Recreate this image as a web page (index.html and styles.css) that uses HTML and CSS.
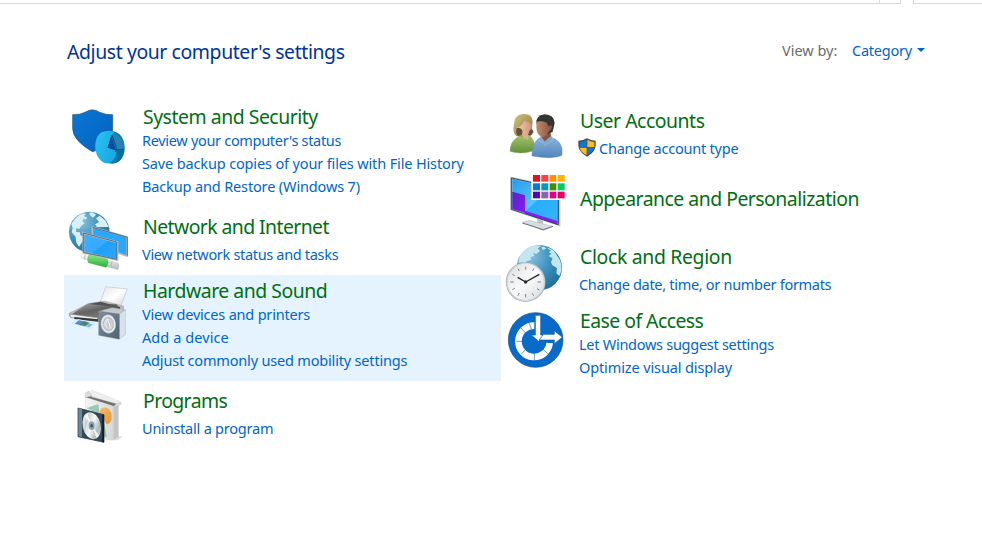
FILE: index.html
```html
<!DOCTYPE html>
<html lang="en">
<head>
<meta charset="utf-8">
<title>Control Panel</title>
<link rel="stylesheet" href="styles.css">
</head>
<body>
<div class="toolbar"><div class="address"><span class="refresh"></span></div><div class="search"></div></div>
<header class="header">
  <h1>Adjust your computer's settings</h1>
  <div class="view"><span class="view-label">View by:</span><a class="view-value">Category</a><svg class="caret" viewBox="0 0 8 4"><path d="M0 0h8L4 4z"/></svg></div>
</header>
<main class="columns">
  <div class="column">
    <section class="card">
      <svg class="icon" viewBox="12 3 210 180">
        <defs>
          <linearGradient id="shield" x2="1" y2="1"><stop stop-color="#0878d4"/><stop offset="1" stop-color="#0560bd"/></linearGradient>
          <linearGradient id="pie" x2="1" y2="1"><stop stop-color="#2bc4f3"/><stop offset="1" stop-color="#16a3de"/></linearGradient>
        </defs>
        <path d="M38 44Q60 45 75 37Q97 22 119 37Q136 45 158 44V87Q157 121 99 156Q39 122 38 86Z" fill="url(#shield)" stroke="#24527d" stroke-width="2"/>
        <path d="M133 95L157 93C179 96 194 116 194 143C194 169 179 189 158 191L143 190Z" fill="#087da9"/>
        <ellipse cx="138" cy="142" rx="32" ry="48" fill="url(#pie)" transform="rotate(-6 138 142)"/>
        <path d="M134 94Q149 90 163 97L155 106L169 151L141 143Z" fill="#20b5e7"/>
        <path d="M154 106L142 143L169 152Z" fill="#064b9d"/>
        <path d="M163 98L154 107L171 150L193 147Q193 116 163 98Z" fill="#2584b4"/>
        <path d="M156 106L171 150L192 147M171 151L166 155" stroke="#0b4b79" stroke-width="3" fill="none"/>
        <path d="M171 153L193 150Q190 180 169 188Q175 171 171 153Z" fill="#086e9c"/>
      </svg>
      <div class="text">
        <h2 class="t-system">System and Security</h2>
        <a class="l-review">Review your computer's status</a>
        <a class="l-save">Save backup copies of your files with File History</a>
        <a class="l-backup">Backup and Restore (Windows 7)</a>
      </div>
    </section>
    <section class="card single">
      <svg class="icon" viewBox="12 18 210 180">
        <defs>
          <radialGradient id="globe" cx=".3" cy=".25" r=".9"><stop stop-color="#8ac2df"/><stop offset=".5" stop-color="#3c91bd"/><stop offset="1" stop-color="#16698f"/></radialGradient>
          <linearGradient id="screen" x2="1" y2="1"><stop stop-color="#42aef9"/><stop offset=".5" stop-color="#35aaff"/><stop offset=".51" stop-color="#1e9ffb"/><stop offset="1" stop-color="#2ba9ff"/></linearGradient>
          <linearGradient id="cable" x1=".1" x2="0" y2="1"><stop stop-color="#fff"/><stop offset="1" stop-color="#adb5b6"/></linearGradient>
          <linearGradient id="plug" x1=".1" x2="0" y2="1"><stop stop-color="#84e982"/><stop offset="1" stop-color="#25a932"/></linearGradient>
        </defs>
        <circle cx="88" cy="81" r="61" fill="url(#globe)"/>
        <path transform="translate(0 4)" d="M34 54Q48 30 68 21L78 23L72 29L82 34L75 41L72 36L67 45L74 51L63 59L58 68L48 66L49 77L60 78L61 87L72 91L68 105L57 121L49 109L47 91L35 78L38 65ZM87 20L96 18L108 25L99 34L92 29ZM108 36L119 28L137 43L146 62H111L105 54L117 47ZM57 38L64 35L68 39L62 44Z" fill="#d8eff4"/>
        <path d="M97 66L201 96V153L174 144L97 119Z" fill="#29a7fb" stroke="#b1b9bf" stroke-width="5"/>
        <path d="M98 67L202 97V152" fill="none" stroke="#29485a" stroke-width="2"/>
        <path d="M70 84L172 112V165L70 142Z" fill="url(#screen)" stroke="#b5bec3" stroke-width="6"/>
        <path d="M70 84L170 111V163L70 142Z" fill="none" stroke="#25495f" stroke-width="2"/>
        <path d="M65 146L91 150V168L64 159Q61 151 65 146ZM139 165L174 174Q181 184 173 194L139 184Z" fill="url(#cable)" stroke="#b3babc" stroke-width="1"/>
        <path d="M88 149L142 163Q149 175 138 187L85 173Q80 157 88 149Z" fill="url(#plug)" stroke="#3f9850" stroke-width="1"/>
        <path d="M156 169Q151 178 155 188M76 149Q72 156 75 164" stroke="#a0a8a8" stroke-width="2" fill="none"/>
      </svg>
      <div class="text">
        <h2 class="t-network">Network and Internet</h2>
        <a class="l-network">View network status and tasks</a>
      </div>
    </section>
    <section class="card selected">
      <svg class="icon" viewBox="12 0 210 180">
        <defs>
          <linearGradient id="paper" x2="1" y2="1"><stop stop-color="#e2e2e2"/><stop offset=".5" stop-color="#fff"/><stop offset="1" stop-color="#cfcfcf"/></linearGradient>
          <linearGradient id="lid" x2=".7" y2="1"><stop stop-color="#b1b1b1"/><stop offset=".5" stop-color="#626262"/><stop offset="1" stop-color="#858585"/></linearGradient>
          <linearGradient id="speaker" x2="1" y2="1"><stop stop-color="#7d8c9a"/><stop offset="1" stop-color="#4e6275"/></linearGradient>
          <radialGradient id="cone"><stop stop-color="#858b90"/><stop offset=".3" stop-color="#f3f4f4"/><stop offset=".65" stop-color="#b8bec2"/><stop offset=".85" stop-color="#f2f3f4"/><stop offset="1" stop-color="#a0abb3"/></radialGradient>
        </defs>
        <path d="M137 35L202 42L180 99L119 88Z" fill="url(#paper)" stroke="#c3c5c6" stroke-width="2"/>
        <path d="M28 114L88 85L134 78L191 93L190 116L116 139L91 137L29 125Z" fill="#bdbdbd" stroke="#8c8c8c" stroke-width="1"/>
        <path d="M31 121L82 86L170 88L178 101L117 134Z" fill="url(#lid)"/>
        <path d="M84 87L122 80L181 96L179 103L167 95Z" fill="#535353"/>
        <path d="M29 117L113 128V137L33 128Z" fill="#ededed" stroke="#888" stroke-width="2"/>
        <path d="M43 126L115 133V140L43 132Z" fill="#363838"/>
        <path d="M55 133L104 145L93 160L36 145Z" fill="#edf7fd" stroke="#a8c2d1" stroke-width="1"/>
        <path d="M56 136L72 139L62 151L44 146Z" fill="#508ed4"/><path d="M72 138L90 144L76 154L59 150Z" fill="#3f8871"/><path d="M85 145L99 147L89 157L75 154Z" fill="#82b8e6"/>
        <path d="M116 109L178 117L196 104V179L178 192Z" fill="#bdc9d3"/>
        <path d="M116 109L156 98L196 104L178 118Z" fill="#c3c8cc" stroke="#8d979f" stroke-width="1"/>
        <path d="M178 118L196 105V179L178 192Z" fill="#d7e2e9" stroke="#a8b3bc" stroke-width="1"/>
        <path d="M116 109L178 117V193L116 181Z" fill="url(#speaker)" stroke="#778692" stroke-width="1"/>
        <ellipse cx="145" cy="147" rx="23" ry="29" fill="url(#cone)" transform="rotate(-8 145 147)"/>
        <ellipse cx="147" cy="147" rx="8" ry="12" fill="#c3c8cc"/><path d="M141 130L148 147L151 161" stroke="#f8f8f8" stroke-width="3" fill="none"/>
      </svg>
      <div class="text">
        <h2 class="t-hardware">Hardware and Sound</h2>
        <a class="l-devices">View devices and printers</a>
        <a class="l-add">Add a device</a>
        <a class="l-adjust">Adjust commonly used mobility settings</a>
      </div>
    </section>
    <section class="card single">
      <svg class="icon" viewBox="-3 15 210 180">
        <defs>
          <linearGradient id="box"><stop stop-color="#f5f5f5"/><stop offset="1" stop-color="#d8d8d8"/></linearGradient>
          <linearGradient id="orange" x2="1" y2="1"><stop stop-color="#f7bd6b"/><stop offset="1" stop-color="#e99431"/></linearGradient>
          <linearGradient id="disc" x2="1" y2="1"><stop stop-color="#fff"/><stop offset=".3" stop-color="#cbd3d3"/><stop offset=".5" stop-color="#fafafa"/><stop offset=".75" stop-color="#adb8b9"/><stop offset="1" stop-color="#f7f7f7"/></linearGradient>
        </defs>
        <path d="M145 170L174 169L159 181H117Z" fill="#ddd"/>
        <path d="M61 52L145 76V180L61 161Z" fill="url(#box)" stroke="#c9c9c9" stroke-width="1"/>
        <path d="M145 76L161 71V171L145 180Z" fill="#c4c4c4"/>
        <path d="M61 51L82 45L160 69L146 78Z" fill="#6f6f6f"/>
        <path d="M80 30L166 65L160 73L79 50Z" fill="#eee" stroke="#c5c5c5" stroke-width="1"/>
        <path d="M61 39L73 33L80 49L61 52ZM149 75L167 67L169 72L149 82Z" fill="#ddd" stroke="#ababab" stroke-width="1"/>
        <path d="M65 84L100 72L103 98L85 94ZM117 127L126 171L114 169Z" fill="#9bc8b4"/>
        <path d="M103 99Q104 83 120 82Q136 86 140 105Q141 129 127 133Q117 131 115 103Z" fill="url(#orange)"/>
        <path d="M39 84L117 104V187L39 170Z" fill="#33495c" stroke="#17232e" stroke-width="2"/>
        <path d="M40 84L51 87V172L40 169Z" fill="#718493"/>
        <ellipse cx="80" cy="137" rx="27" ry="41" fill="url(#disc)" transform="rotate(-13 80 137)"/>
        <path d="M79 133L58 109L67 101ZM83 140L102 166L94 174Z" fill="#fff" opacity=".8"/>
        <ellipse cx="80" cy="137" rx="9" ry="13" fill="#8fa3b0"/><ellipse cx="80" cy="137" rx="4" ry="6" fill="#405d70"/>
        <path d="M114 104V187" stroke="#071118" stroke-width="4"/>
      </svg>
      <div class="text">
        <h2 class="t-programs">Programs</h2>
        <a class="l-uninstall">Uninstall a program</a>
      </div>
    </section>
  </div>
  <div class="column right">
    <section class="card single">
      <svg class="icon" viewBox="3 15 210 180">
        <defs>
          <linearGradient id="blonde" x2="1" y2="1"><stop stop-color="#d2c17f"/><stop offset="1" stop-color="#8e7745"/></linearGradient>
          <linearGradient id="face1"><stop stop-color="#f5ceb1"/><stop offset="1" stop-color="#ce967b"/></linearGradient>
          <linearGradient id="face2"><stop stop-color="#c18d70"/><stop offset="1" stop-color="#855139"/></linearGradient>
          <linearGradient id="green" x2="0" y2="1"><stop stop-color="#a4c86c"/><stop offset="1" stop-color="#638e38"/></linearGradient>
          <linearGradient id="blue" x2="0" y2="1"><stop stop-color="#8fb7df"/><stop offset="1" stop-color="#5184bb"/></linearGradient>
        </defs>
        <path d="M30 154Q31 123 54 111L65 104L90 107Q103 119 106 145L96 154Q62 164 30 154Z" fill="url(#green)" stroke="#739650" stroke-width="1"/>
        <path d="M49 109Q36 98 42 72Q43 43 70 42Q97 41 98 64L94 104L82 110Z" fill="url(#blonde)"/>
        <path d="M63 98L87 100L84 120L71 115Z" fill="#dbae90"/>
        <path d="M50 84Q66 80 72 64Q87 65 94 74Q94 99 81 105Q66 103 62 87Z" fill="url(#face1)"/>
        <path d="M56 83Q73 88 65 104L54 108Q46 100 50 85ZM90 89Q99 84 100 97L93 107L84 104Z" fill="#655036"/>
        <path d="M96 168Q96 133 113 118L127 108L153 112Q181 121 186 144L186 166Q158 179 96 168Z" fill="url(#blue)" stroke="#4d7fae" stroke-width="1"/>
        <path d="M126 102L151 95L154 113L133 128L121 112Z" fill="#875239"/>
        <path d="M109 70Q107 47 134 43Q162 44 164 69L158 95L142 103Z" fill="#343433"/>
        <path d="M109 65Q124 61 140 68L146 79L153 76Q159 78 153 89L146 96Q139 112 125 112Q108 101 109 80Z" fill="url(#face2)"/>
        <path d="M122 109L134 125L154 108L160 117L136 137L118 119Z" fill="#7fa9d5" stroke="#b9d4ef" stroke-width="1"/>
        <path d="M171 148V170M114 145V168" stroke="#6696c5" stroke-width="2"/>
      </svg>
      <div class="text">
        <h2 class="t-user">User Accounts</h2>
        <a class="l-account"><svg class="uac" viewBox="0 0 54 57"><path d="M1 8Q16 8 27 1Q38 8 53 8V23Q51 42 27 56Q3 42 1 23Z" fill="#474747"/><path d="M5 12Q17 11 26 5V28H5ZM28 28H49Q47 41 28 52Z" fill="#0c78d5"/><path d="M28 5Q37 11 49 12V27H28ZM5 29H26V52Q7 41 5 29Z" fill="#ffb918"/></svg>Change account type</a>
      </div>
    </section>
    <section class="card bare">
      <svg class="icon" viewBox="3 12 210 180">
        <defs>
          <linearGradient id="monitor" x2="1" y2="1"><stop stop-color="#2199ef"/><stop offset=".5" stop-color="#5bc3fb"/><stop offset=".51" stop-color="#2aaefa"/><stop offset="1" stop-color="#35b5fa"/></linearGradient>
          <linearGradient id="purple" x2="1" y2="1"><stop stop-color="#5426bd"/><stop offset="1" stop-color="#8b16ff"/></linearGradient>
        </defs>
        <path d="M112 157L129 160V180L112 174Z" fill="#bac1c4"/>
        <path d="M67 171L88 166L159 184L130 197Z" fill="#d6dce0" stroke="#9ca7ae" stroke-width="1"/><path d="M67 174L130 194L159 184" fill="none" stroke="#65737c" stroke-width="3"/>
        <path d="M34 38L178 70V180L34 133Z" fill="url(#monitor)" stroke="#c3c9ce" stroke-width="6"/>
        <path d="M37 80L75 91V143L37 132Z" fill="url(#purple)"/><path d="M75 137L172 168V179L75 146Z" fill="#861bf2"/>
        <path d="M34 39L175 70V179L34 133Z" fill="none" stroke="#344858" stroke-width="3"/>
        <path d="M94 27H198V105H94Z" fill="#fff"/>
        <path d="M99 30h21v20H99z" fill="#e60e20"/><path d="M124 30h21v20h-21z" fill="#ff4141"/><path d="M149 30h20v20h-20z" fill="#ff9100"/><path d="M173 30h21v20h-21z" fill="#ffb500"/>
        <path d="M99 55h21v21H99z" fill="#087bd0"/><path d="M124 55h21v21h-21z" fill="#0799b6"/><path d="M149 55h20v21h-20z" fill="#458a03"/><path d="M173 55h21v21h-21z" fill="#00cb6b"/>
        <path d="M99 80h21v20H99z" fill="#5600ce"/><path d="M124 80h21v20h-21z" fill="#8b63bb"/><path d="M149 80h20v20h-20z" fill="#e4008b"/><path d="M173 80h21v20h-21z" fill="#e9005a"/>
      </svg>
      <div class="text"><h2 class="t-appearance">Appearance and Personalization</h2></div>
    </section>
    <section class="card single">
      <svg class="icon" viewBox="3 3 210 180">
        <defs><linearGradient id="dial" x2="1" y2="1"><stop stop-color="#d7dadd"/><stop offset=".5" stop-color="#fafafa"/><stop offset="1" stop-color="#d6d8dd"/></linearGradient></defs>
        <circle cx="118" cy="83" r="68" fill="url(#globe)"/>
        <path d="M59 49Q78 21 108 16L124 18L113 25L120 33L109 42L99 38L103 47L91 51L94 59L80 64L77 74L67 67L55 69ZM141 24Q155 25 164 36L172 48Q187 67 184 93L178 108L169 100L171 84L157 76L153 66L158 55L145 48L154 42L146 36L153 32ZM124 21L133 20L139 26L128 30Z" fill="#c4e6f1"/>
        <circle cx="77" cy="126" r="57" fill="url(#dial)" stroke="#a5b0b8" stroke-width="5"/>
        <circle cx="77" cy="126" r="56" fill="none" stroke="#eef1f4" stroke-width="2"/>
        <path d="M77 80v9M77 162v10M31 126h10M113 126h10M54 86l4 7M97 160l4 7M37 103l7 4M111 146l7 4M37 149l7-4M54 167l4-8M98 92l4-7" stroke="#7e8389" stroke-width="3"/>
        <path d="M77 126L118 103M77 126L53 112" fill="none" stroke="#222527" stroke-width="4"/><circle cx="77" cy="126" r="5" fill="#242728"/>
      </svg>
      <div class="text">
        <h2 class="t-clock">Clock and Region</h2>
        <a class="l-date">Change date, time, or number formats</a>
      </div>
    </section>
    <section class="card">
      <svg class="icon" viewBox="3 0 210 180">
        <circle cx="107" cy="105" r="82" fill="#086bc9" stroke="#124c85" stroke-width="2"/>
        <path d="M103 62A47 47 0 1 0 149 114" fill="none" stroke="#fff" stroke-width="20"/>
        <path d="M62 68L77 84M49 109H69M64 147L78 132M103 166V145M143 146L127 131M87 54L94 72" stroke="#176bb6" stroke-width="2"/>
        <path d="M106 31H122V90H134L116 109L94 90H106Z" fill="#fff" stroke="#0c5baa" stroke-width="2"/>
        <path d="M130 88H163V77L187 97L163 116V105H118Z" fill="#fff" stroke="#0c5baa" stroke-width="2"/>
      </svg>
      <div class="text">
        <h2 class="t-ease">Ease of Access</h2>
        <a class="l-suggest">Let Windows suggest settings</a>
        <a class="l-optimize">Optimize visual display</a>
      </div>
    </section>
  </div>
</main>
</body>
</html>
```
FILE: styles.css
```css
* { box-sizing: border-box; }
body {
  margin: 0;
  height: 537px;
  overflow: hidden;
  background: #fff;
  font: 14.5px/23px "Noto Sans", sans-serif;
  color: #0066cc;
}
h1, h2 { margin: 0; font-weight: 400; white-space: nowrap; }
.toolbar { display: flex; gap: 12px; height: 4px; }
.address, .search { border-bottom: 1px solid #d9d9d9; }
.address { width: 901px; border-right: 1px solid #d9d9d9; display: flex; justify-content: flex-end; }
.refresh { width: 21px; border-left: 1px solid #d9d9d9; }
.search { flex: 1; border-left: 1px solid #d9d9d9; }
.header {
  display: flex;
  justify-content: space-between;
  height: 97px;
  padding: 35px 57px 0 67px;
}
h1 { font-size: 19.4px; line-height: 26px; letter-spacing: -0.39px; color: #003399; }
.view { display: flex; height: 23px; }
.view-label { width: 70px; color: #6d6d6d; }
.view-value { width: 65px; letter-spacing: -0.25px; }
.caret { width: 8px; height: 4px; margin-top: 9px; fill: #0066cc; }
.columns { display: grid; grid-template-columns: 437px 437px; padding-left: 64px; align-items: start; }
.column { display: flex; flex-direction: column; gap: 4px; }
.right { padding-top: 4px; }
.card { display: flex; min-height: 60px; padding-bottom: 9px; }
.single { padding-bottom: 0; }
.bare { height: 68px; }
.selected { background: #e5f3ff; }
.icon { width: 70px; height: 60px; overflow: visible; flex: none; margin-right: 8px; }
.text { display: flex; flex-direction: column; }
.text a { display: flex; height: 23px; white-space: nowrap; }
h2 { height: 28px; padding: 3px 0 0 1px; font-size: 19.4px; line-height: 26px; color: #006e12; }
.single h2 { height: 32px; }
.bare h2 { margin-top: 14px; }
.uac { width: 18px; height: 19px; margin: 1px 3px 0 -1px; flex: none; }

/* Tracking per label */
.t-system { letter-spacing: -0.46px; }
.t-network { letter-spacing: -0.57px; }
.t-hardware { letter-spacing: -0.46px; }
.t-programs { letter-spacing: -0.6px; }
.t-user { letter-spacing: -0.46px; }
.t-appearance { letter-spacing: -0.5px; }
.t-clock { letter-spacing: -0.33px; }
.t-ease { letter-spacing: -0.54px; }
.l-review { letter-spacing: -0.31px; }
.l-save { letter-spacing: -0.14px; }
.l-backup { letter-spacing: -0.14px; }
.l-network { letter-spacing: -0.32px; }
.l-devices { letter-spacing: -0.2px; }
.l-add { letter-spacing: 0.08px; }
.l-adjust { letter-spacing: -0.18px; }
.l-uninstall { letter-spacing: -0.22px; }
.l-account { letter-spacing: -0.22px; }
.l-date { letter-spacing: -0.3px; }
.l-suggest { letter-spacing: -0.27px; }
.l-optimize { letter-spacing: -0.12px; }
```
